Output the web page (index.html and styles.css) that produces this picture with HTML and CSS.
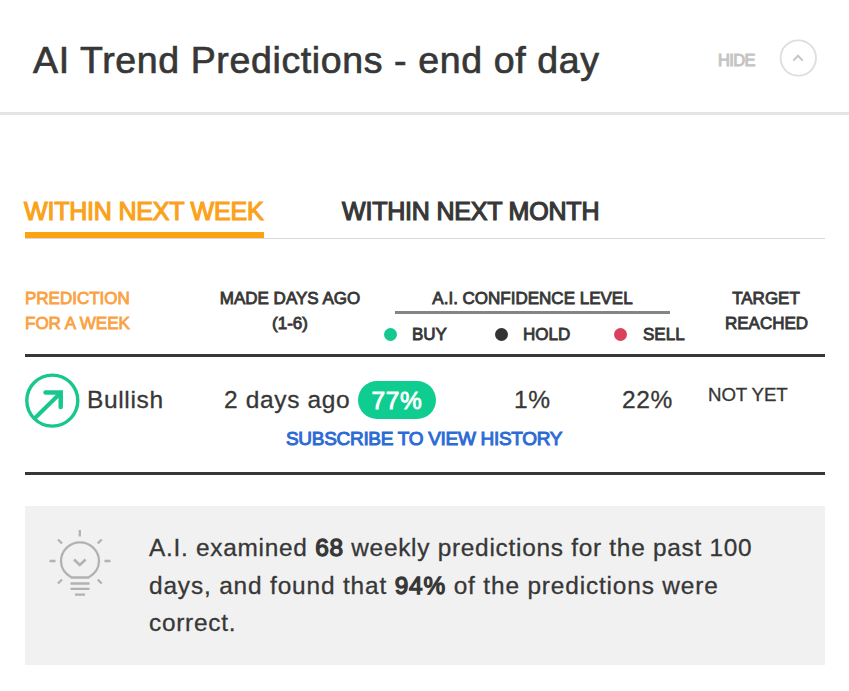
FILE: index.html
```html
<!DOCTYPE html>
<html lang="en">
<head>
<meta charset="utf-8">
<title>AI Trend Predictions</title>
<link rel="stylesheet" href="styles.css">
</head>
<body>
<header class="head">
  <h1 class="title">AI Trend Predictions - end of day</h1>
  <span class="hide strong">HIDE</span>
  <svg class="toggle" width="40" height="40" viewBox="0 0 40 40" fill="none"><circle cx="20.300" cy="20" r="17.7" stroke="#dedede" stroke-width="1.8"/><path d="M15.3 22.6 20 17.8l4.700 4.800" stroke="#c6c6c6" stroke-width="2"/></svg>
</header>
<main class="content">
  <nav class="tabs">
    <a class="tab tab-active strong">WITHIN NEXT WEEK</a>
    <a class="tab strong">WITHIN NEXT MONTH</a>
  </nav>
  <section class="table">
    <div class="row labels strong">
      <div class="col-name">PREDICTION<br>FOR A WEEK</div>
      <div class="col-made">MADE DAYS AGO<br>(1-6)</div>
      <div class="col-level">
        <div class="level-title">A.I. CONFIDENCE LEVEL</div>
        <div class="legend">
          <span class="key buy"><i class="dot"></i>BUY</span>
          <span class="key hold"><i class="dot"></i>HOLD</span>
          <span class="key sell"><i class="dot"></i>SELL</span>
        </div>
      </div>
      <div class="col-target">TARGET<br>REACHED</div>
    </div>
    <div class="data">
      <div class="row values">
        <div class="trend">
          <svg width="56" height="56" viewBox="0 0 56 56" fill="none" stroke="#18c78e"><circle cx="27.300" cy="27.600" r="25.500" stroke-width="3.400"/><path d="M9.500 45.500 35.500 20" stroke-width="4"/><path d="M20.500 19.600H35.700V34" stroke-width="4.500" stroke-linecap="round" stroke-linejoin="miter"/></svg>
          <span class="bullish">Bullish</span>
        </div>
        <div class="ago">2 days ago</div>
        <div class="pill">77%</div>
        <div class="pct one">1%</div>
        <div class="pct two">22%</div>
        <div class="status">NOT YET</div>
      </div>
      <a class="subscribe strong">SUBSCRIBE TO VIEW HISTORY</a>
    </div>
  </section>
  <aside class="note">
    <svg class="bulb" width="64" height="70" viewBox="0 0 64 70" fill="none" stroke="#b2b2b2" stroke-width="2.300"><path d="M23.500 49.500C17.500 46 13 40.500 13 33.300a19 19 0 0 1 38 0C51 40.500 46.500 46 40.500 49.500Z"/><path d="M26 31.500l5.800 5.500 5.800-5.500" stroke-width="2.600"/><path d="M22.500 55.500h19M22.500 60.800h19M27 66.700h10M31.800 2v6.500M1.500 33h6M56.500 33h6M10 11.500l4 4M53.700 11.500l-4 4M10 55.500l4-4M53.700 55.500l-4-4"/></svg>
    <p class="text">A.I. examined <b>68</b> weekly predictions for the past 100<br><span class="line-wide">days, and found that <b>94%</b> of the predictions were</span><br>correct.</p>
  </aside>
</main>
</body>
</html>
```
FILE: styles.css
```css
* { box-sizing: border-box; }
body { margin: 0; background: #fff; color: #373737; font-family: "Liberation Sans", Arial, sans-serif; }
.strong { -webkit-text-stroke: 1px currentColor; }
.head { display: flex; align-items: flex-start; height: 115px; padding-left: 33px; border-bottom: 3px solid #e4e4e4; white-space: nowrap; }
.title { width: 685px; margin: 39px 0 0; font-size: 37.500px; line-height: 42px; font-weight: 400; letter-spacing: 0.62px; -webkit-text-stroke: 0.7px currentColor; }
.hide { width: 60px; margin-top: 50px; color: #c4c4c4; font-size: 16.500px; line-height: 20px; letter-spacing: -0.6px; }
.toggle { margin-top: 38px; }
.content { width: 800px; margin-left: 25px; white-space: nowrap; }
.tabs { display: flex; gap: 78px; height: 124px; border-bottom: 1px solid #d8d8d8; }
.tab { height: 123px; padding-top: 81px; font-size: 25px; line-height: 30px; letter-spacing: -0.2px; -webkit-text-stroke-width: 1.200px; }
.tab-active { width: 239px; color: #faa21b; border-bottom: 6px solid #fca311; text-indent: -1px; }
.row { display: flex; }
.labels { height: 118px; padding-top: 47px; border-bottom: 3px solid #373737; font-size: 17px; line-height: 25px; letter-spacing: 0; -webkit-text-stroke-width: 0.85px; }
.col-name { width: 194px; color: #faa243; }
.col-made { width: 142px; text-align: center; }
.col-level { width: 364px; }
.level-title { width: 275px; margin-left: 34px; height: 28px; border-bottom: 3px solid #858585; text-align: center; }
.legend { display: flex; margin-left: 23px; padding-top: 8px; line-height: 25px; }
.key { display: flex; align-items: center; }
.dot { width: 13px; height: 13px; margin-right: 15px; border-radius: 50%; background: #14c890; }
.buy { width: 111px; }
.hold { width: 119px; }
.hold .dot { background: #333; }
.sell .dot { margin-right: 16px; background: #d9415c; }
.col-target { width: 82px; text-align: center; }
.data { height: 118px; border-bottom: 3px solid #373737; }
.values { height: 71px; padding-top: 16px; font-size: 24.500px; line-height: 28px; letter-spacing: 0.65px; -webkit-text-stroke: 0.3px currentColor; }
.trend { display: flex; width: 199px; gap: 6px; }
.bullish, .ago, .pct { padding-top: 13px; }
.ago { width: 134px; }
.pill { width: 78px; height: 38px; margin-top: 8px; padding-top: 6px; border-radius: 19px; background: #0fcd91; color: #fff; text-align: center; -webkit-text-stroke: 0.8px currentColor; }
.one { width: 108px; padding-left: 78px; margin-right: 78px; }
.two { width: 86px; }
.status { padding-top: 9px; font-size: 18.700px; line-height: 26px; letter-spacing: -0.1px; }
.subscribe { display: block; width: 276px; margin-left: 261px; color: #2c6bd6; font-size: 19px; line-height: 21px; letter-spacing: -0.3px; }
.note { display: flex; height: 159px; margin-top: 31px; padding-left: 23px; background: #f1f1f1; }
.bulb { margin: 22px 37px 0 0; }
.text { margin: 23px 0 0; font-size: 24.400px; line-height: 37.500px; letter-spacing: 0.73px; -webkit-text-stroke: 0.3px currentColor; }
.line-wide { letter-spacing: 0.85px; }
.text b { font-weight: 400; -webkit-text-stroke: 1.300px currentColor; }
```
